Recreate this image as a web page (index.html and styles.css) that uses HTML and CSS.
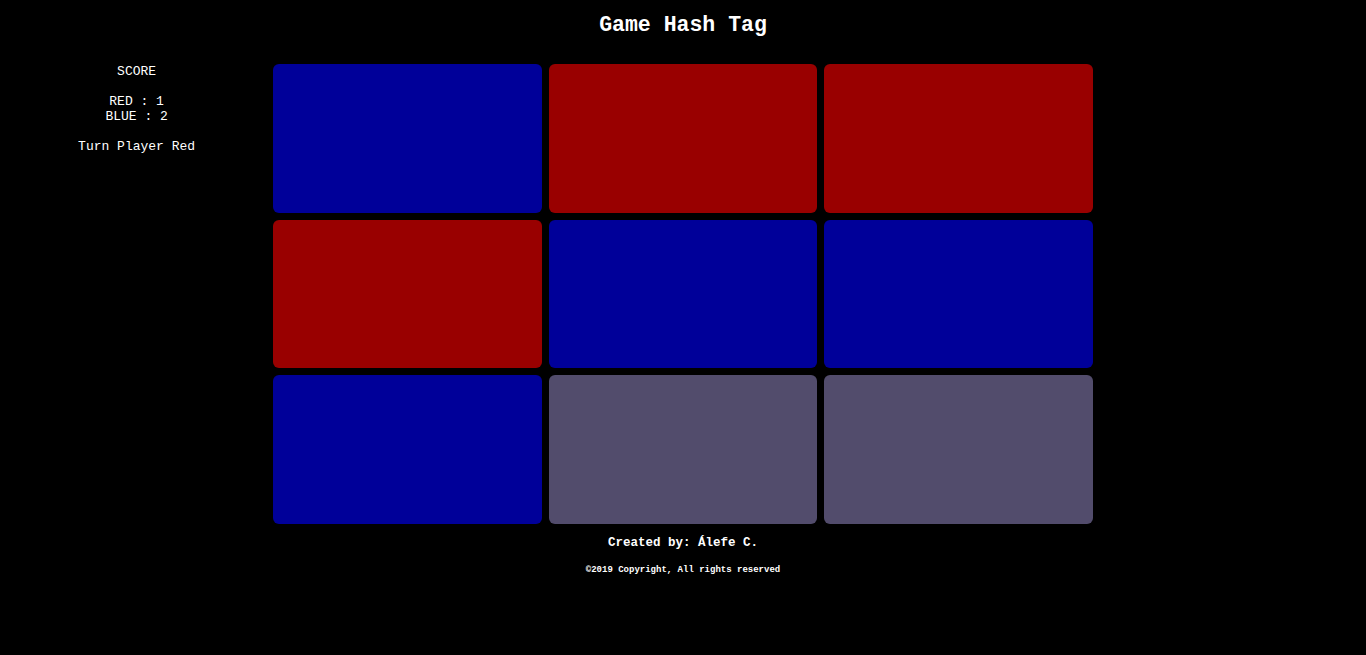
FILE: index.html
```html
<!DOCTYPE html>
<html lang="en">
<head>
<meta charset="utf-8">
<title>Game Hash Tag</title>
<link rel="stylesheet" href="styles.css">
</head>
<body>
<header class="header">
  <h1 class="title">Game Hash Tag</h1>
</header>
<main class="layout">
  <aside class="score">
    <p class="score-line">SCORE</p>
    <p class="score-line">RED : 1<br>BLUE : 2</p>
    <p class="score-line">Turn Player Red</p>
  </aside>
  <section class="board">
    <div class="cell blue"></div>
    <div class="cell red"></div>
    <div class="cell red"></div>
    <div class="cell red"></div>
    <div class="cell blue"></div>
    <div class="cell blue"></div>
    <div class="cell blue"></div>
    <div class="cell empty"></div>
    <div class="cell empty"></div>
  </section>
  <div class="side-spacer"></div>
</main>
<footer class="footer">
  <p class="credit">Created by: Álefe C.</p>
  <p class="copyright">©2019 Copyright, All rights reserved</p>
</footer>
</body>
</html>
```

FILE: styles.css
```css
html, body {
  margin: 0;
  padding: 0;
  background: #000;
  color: #fff;
  font-family: "Liberation Mono", "Courier New", monospace;
}

.header {
  text-align: center;
}

.title {
  margin: 13px 0 27px;
  font-size: 21.5px;
  line-height: 24px;
  font-weight: bold;
}

.layout {
  display: flex;
  align-items: flex-start;
}

.score {
  width: 20%;
  text-align: center;
  font-size: 13px;
  line-height: 15px;
}

.score-line {
  margin: 0 0 15px;
}

.board {
  width: 60%;
  display: grid;
  grid-template-columns: repeat(3, 1fr);
  grid-auto-rows: 148.5px;
  gap: 7px;
}

.side-spacer {
  width: 20%;
}

.cell {
  border-radius: 6px;
}

.blue { background: #000099; }
.red { background: #990000; }
.empty { background: #524c6c; }

.footer {
  text-align: center;
  font-weight: bold;
}

.credit {
  margin: 12px 0 0;
  font-size: 12.5px;
  line-height: 15px;
}

.copyright {
  margin: 13px 0 0;
  font-size: 9px;
  line-height: 12px;
}
```
